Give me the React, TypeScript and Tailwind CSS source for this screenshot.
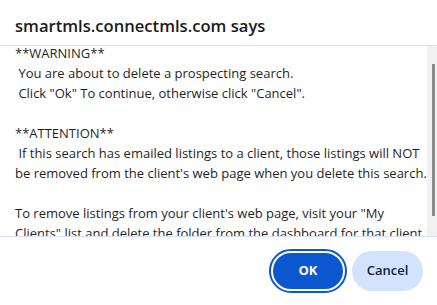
const lines = [
  "**WARNING**",
  " You are about to delete a prospecting search.",
  " Click \"Ok\" To continue, otherwise click \"Cancel\".",
  "",
  "**ATTENTION**",
  " If this search has emailed listings to a client, those listings will NOT",
  "be removed from the client's web page when you delete this search.",
  "",
  "To remove listings from your client's web page, visit your \"My",
  "Clients\" list and delete the folder from the dashboard for that client.",
];

export default function App() {
  return (
    <div className="flex h-[305px] w-[437px] flex-col bg-white font-['Open_Sans',sans-serif] text-[#1f1f1f]">
      <div className="h-[45px] shrink-0 px-[15px] pt-[16px] text-[16.6px] font-semibold leading-[20px] text-[#1b1b1b]">
        smartmls.connectmls.com says
      </div>
      <div className="flex h-[192px] shrink-0 border-y border-[#d3e3fd]">
        <div className="flex-1 overflow-hidden pl-[15px]">
          <div className="-mt-[3px] text-[13px] leading-[20px]">
            {lines.map((line, i) => (
              <div key={i} className="h-[20px] whitespace-pre">
                {line}
              </div>
            ))}
          </div>
        </div>
        <div className="flex w-[10px] shrink-0 justify-end bg-[#f1f1f1] pt-[18px] pr-[2px]">
          <div className="h-[152px] w-[3px] bg-[#8b8b8b]" />
        </div>
      </div>
      <div className="flex justify-end gap-[7px] pr-[14px] pt-[14px]">
        <button className="h-10 w-[74px] rounded-full border-2 border-white bg-[#0b57d0] text-[13px] font-bold text-white outline-2 outline-[#0b57d0]">
          OK
        </button>
        <button className="h-10 w-[71px] rounded-full bg-[#d3e3fd] text-[13px] font-semibold text-[#0a1f44]">
          Cancel
        </button>
      </div>
    </div>
  );
}
